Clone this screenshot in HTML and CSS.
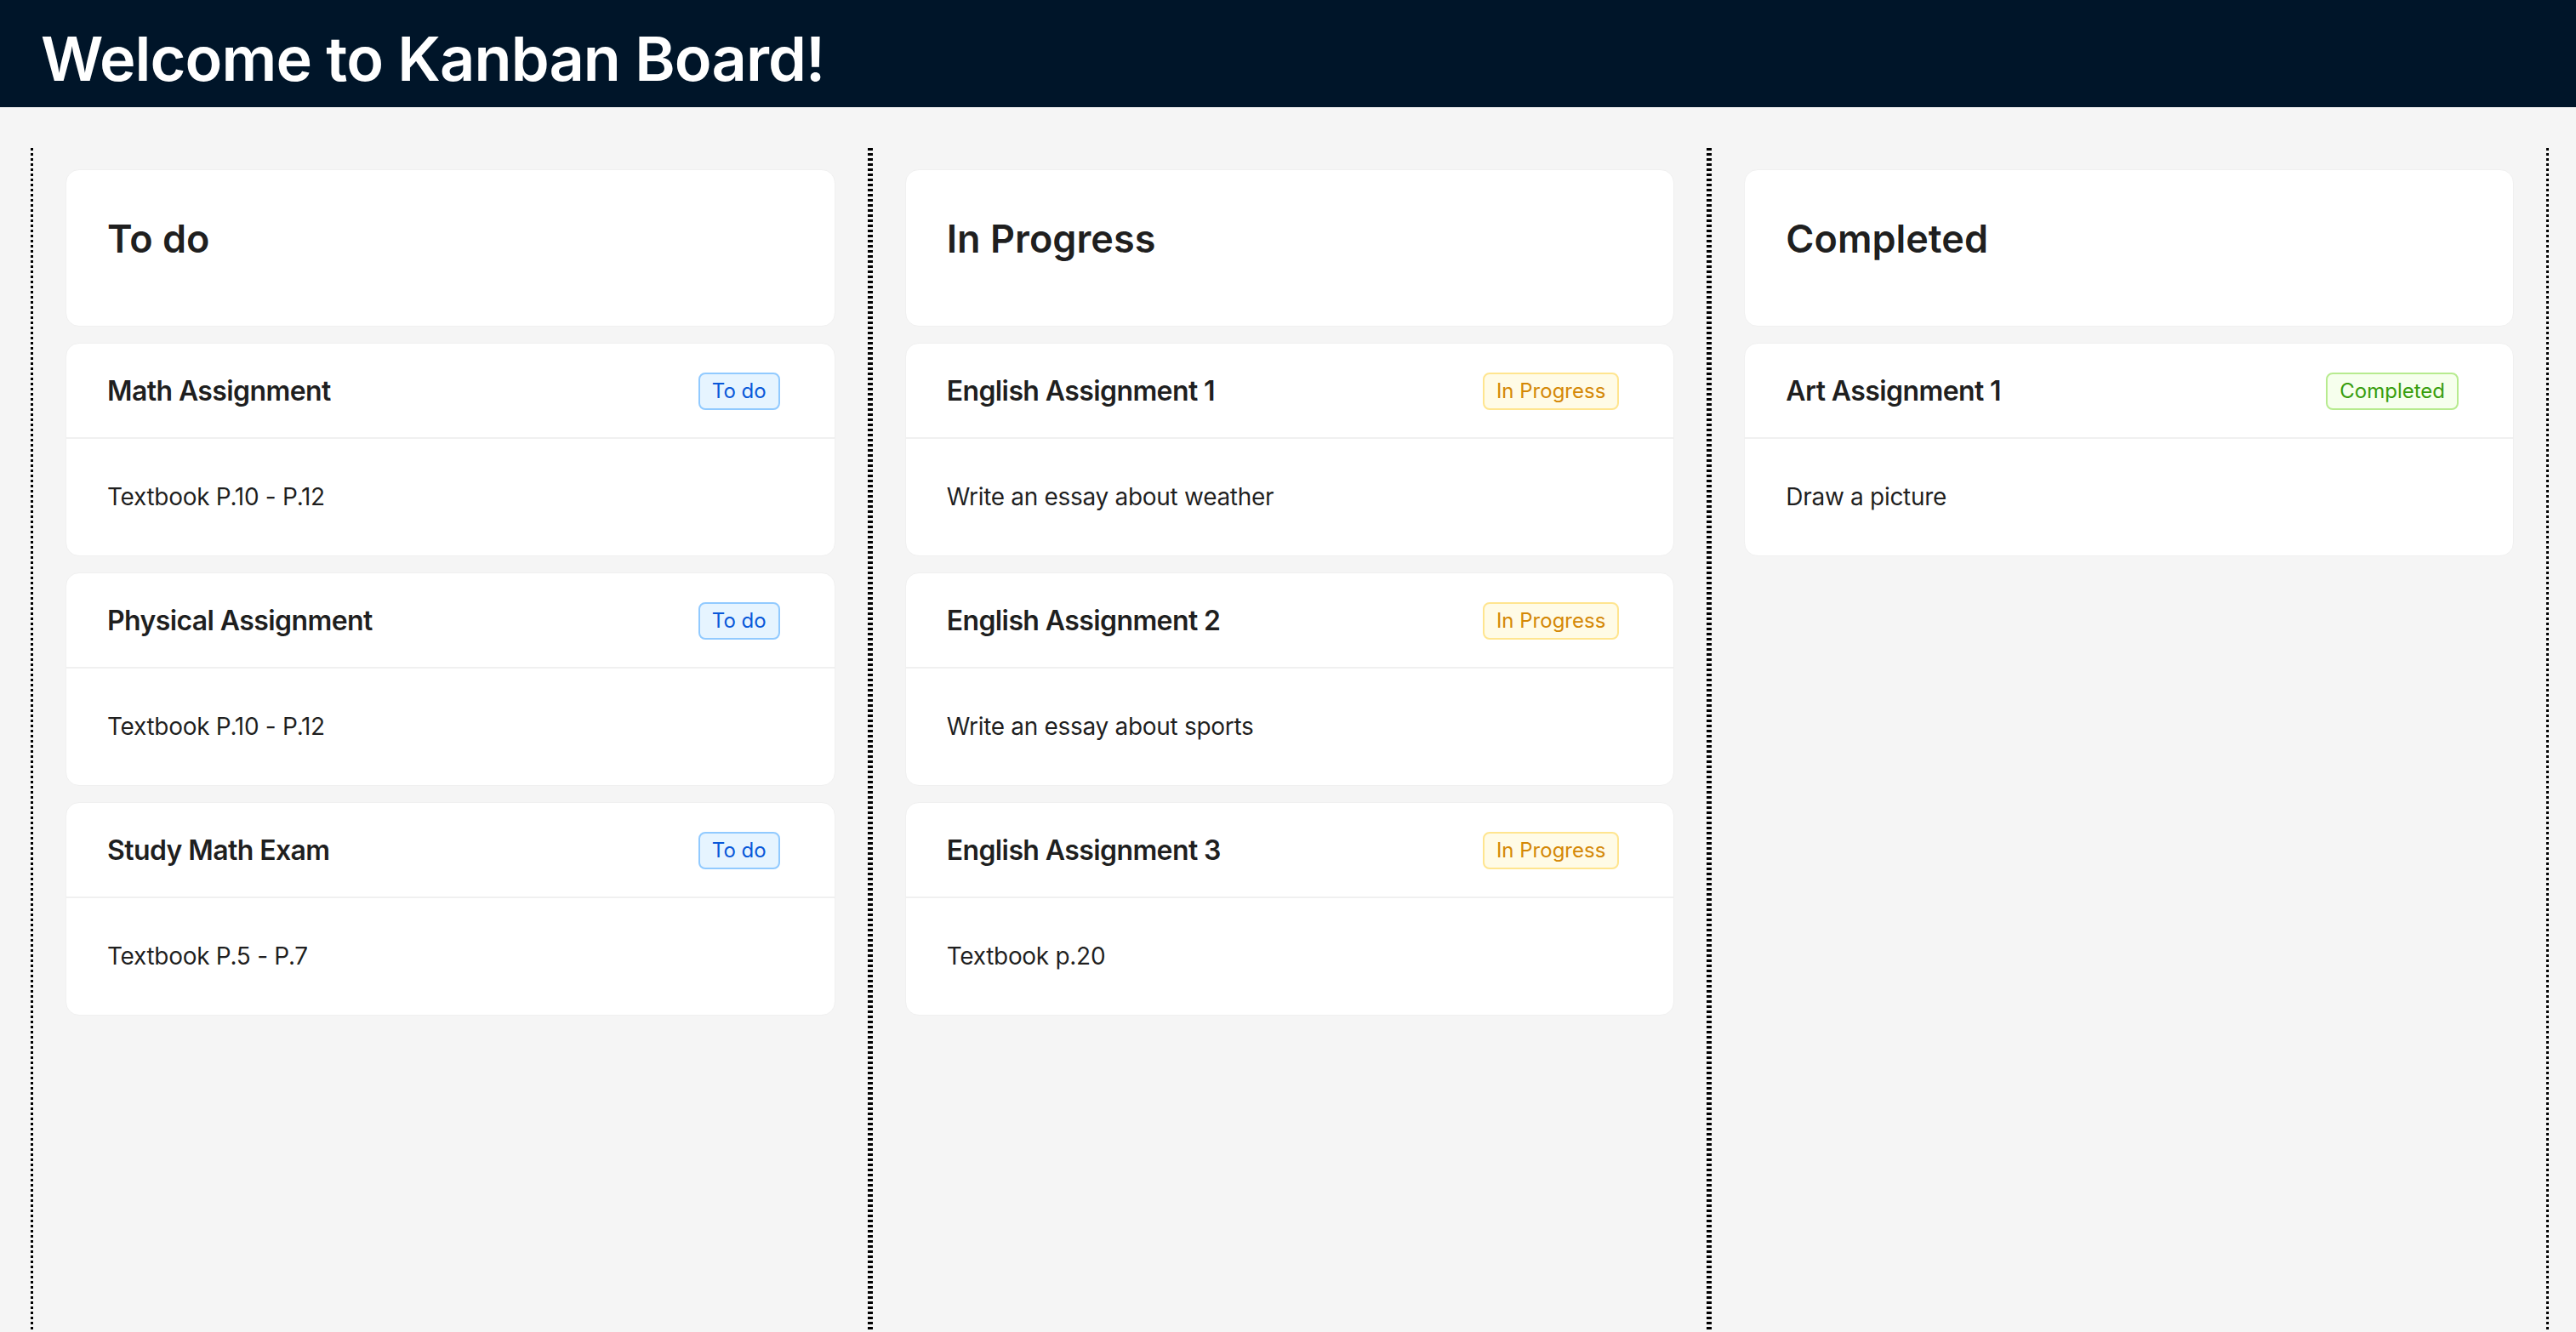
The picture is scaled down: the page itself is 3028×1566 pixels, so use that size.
FILE: index.html
```html
<!DOCTYPE html>
<html lang="en">
<head>
<meta charset="utf-8">
<title>Kanban Board</title>
<link rel="stylesheet" href="styles.css">
</head>
<body>
<header class="topbar">
  <h1 class="title">Welcome to Kanban Board!</h1>
</header>
<main class="board">
  <section class="column">
    <div class="card column-head"><h2 class="column-title">To do</h2></div>
    <article class="card task">
      <div class="task-head"><span class="task-title">Math Assignment</span><span class="tag tag-todo">To do</span></div>
      <div class="task-body">Textbook P.10 - P.12</div>
    </article>
    <article class="card task">
      <div class="task-head"><span class="task-title">Physical Assignment</span><span class="tag tag-todo">To do</span></div>
      <div class="task-body">Textbook P.10 - P.12</div>
    </article>
    <article class="card task">
      <div class="task-head"><span class="task-title">Study Math Exam</span><span class="tag tag-todo">To do</span></div>
      <div class="task-body">Textbook P.5 - P.7</div>
    </article>
  </section>
  <section class="column">
    <div class="card column-head"><h2 class="column-title">In Progress</h2></div>
    <article class="card task">
      <div class="task-head"><span class="task-title">English Assignment 1</span><span class="tag tag-progress">In Progress</span></div>
      <div class="task-body">Write an essay about weather</div>
    </article>
    <article class="card task">
      <div class="task-head"><span class="task-title">English Assignment 2</span><span class="tag tag-progress">In Progress</span></div>
      <div class="task-body">Write an essay about sports</div>
    </article>
    <article class="card task">
      <div class="task-head"><span class="task-title">English Assignment 3</span><span class="tag tag-progress">In Progress</span></div>
      <div class="task-body">Textbook p.20</div>
    </article>
  </section>
  <section class="column">
    <div class="card column-head"><h2 class="column-title">Completed</h2></div>
    <article class="card task">
      <div class="task-head"><span class="task-title">Art Assignment 1</span><span class="tag tag-done">Completed</span></div>
      <div class="task-body">Draw a picture</div>
    </article>
  </section>
</main>
</body>
</html>
```
FILE: styles.css
```css
html, body {
  margin: 0;
  padding: 0;
}

body {
  min-height: 100vh;
  display: flex;
  flex-direction: column;
  background: #f5f5f5;
  font-family: Inter, "Noto Sans", sans-serif;
  color: rgba(0, 0, 0, 0.88);
}

.topbar {
  box-sizing: border-box;
  height: 126px;
  padding: 12px 48px 0;
  display: flex;
  align-items: center;
  background: #001529;
}

.title {
  margin: 0;
  color: #fff;
  font-size: 72px;
  font-weight: 600;
  line-height: 1;
  letter-spacing: -0.9px;
}

.board {
  flex: 1;
  display: grid;
  grid-template-columns: repeat(3, 1fr);
  padding: 48px 32px 0 36px;
}

.column {
  display: flex;
  flex-direction: column;
  gap: 19px;
  padding: 25px 41px 40px;
  background:
    repeating-linear-gradient(to bottom, #000 0 3px, transparent 3px 6px) left top / 3px 100% no-repeat,
    repeating-linear-gradient(to bottom, #000 0 3px, transparent 3px 6px) right top / 3px 100% no-repeat;
}

.card {
  background: #fff;
  border: 1px solid #f0f0f0;
  border-radius: 16px;
}

.column-head {
  box-sizing: border-box;
  height: 185px;
  padding: 51px 48px 0;
}

.column-title {
  margin: 0;
  font-size: 45px;
  font-weight: 600;
  line-height: 60px;
}

.task-head {
  box-sizing: content-box;
  height: 108px;
  padding: 2px 48px 0;
  display: flex;
  align-items: center;
  justify-content: space-between;
  border-bottom: 2px solid #f0f0f0;
}

.task-title {
  font-size: 32px;
  font-weight: 600;
  line-height: 48px;
  letter-spacing: -0.6px;
}

.tag {
  margin-right: 16px;
  padding: 0 14px;
  border: 2px solid;
  border-radius: 8px;
  font-size: 24px;
  line-height: 40px;
}

.tag-todo {
  color: #0958d9;
  background: #e6f4ff;
  border-color: #91caff;
}

.tag-progress {
  color: #d48806;
  background: #fffbe6;
  border-color: #ffe58f;
}

.tag-done {
  color: #389e0d;
  background: #f6ffed;
  border-color: #b7eb8f;
}

.task-body {
  padding: 48px;
  font-size: 28px;
  line-height: 41px;
  letter-spacing: -0.3px;
}
```
